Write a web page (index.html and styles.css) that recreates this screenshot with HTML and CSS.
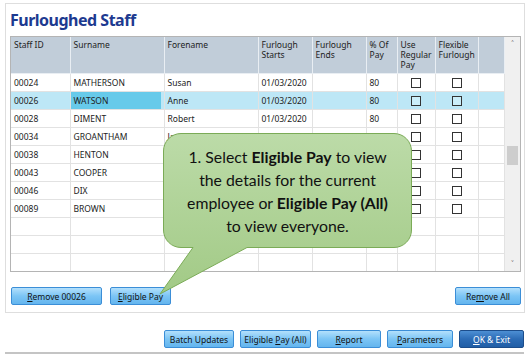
FILE: index.html
```html
<!DOCTYPE html>
<html lang="en">
<head>
    <meta charset="UTF-8">
    <title>Furloughed Staff</title>
    <link rel="stylesheet" href="styles.css">
</head>
<body>
    <div class="window">
        <section class="panel">
            <h1 class="title">Furloughed Staff</h1>

            <!-- Grid staff -->
            <div class="grid">
                <table class="staff">
                    <colgroup>
                        <col style="width:59px"><col style="width:94px"><col style="width:94px">
                        <col style="width:54px"><col style="width:54px"><col style="width:31px">
                        <col style="width:36px"><col style="width:41px"><col>
                    </colgroup>
                    <thead>
                        <tr>
                            <th>Staff ID</th><th>Surname</th><th>Forename</th>
                            <th>Furlough Starts</th><th>Furlough Ends</th><th>% Of Pay</th>
                            <th>Use Regular Pay</th><th>Flexible Furlough</th><th></th>
                        </tr>
                    </thead>
                    <tbody>
                        <tr><td>00024</td><td>MATHERSON</td><td>Susan</td><td>01/03/2020</td><td></td><td>80</td><td class="chk"><span class="box"></span></td><td class="chk"><span class="box"></span></td><td></td></tr>
                        <tr class="current"><td>00026</td><td class="sel">WATSON</td><td>Anne</td><td>01/03/2020</td><td></td><td>80</td><td class="chk"><span class="box"></span></td><td class="chk"><span class="box"></span></td><td></td></tr>
                        <tr><td>00028</td><td>DIMENT</td><td>Robert</td><td>01/03/2020</td><td></td><td>80</td><td class="chk"><span class="box"></span></td><td class="chk"><span class="box"></span></td><td></td></tr>
                        <tr><td>00034</td><td>GROANTHAM</td><td>Jane</td><td>01/03/2020</td><td></td><td>80</td><td class="chk"><span class="box"></span></td><td class="chk"><span class="box"></span></td><td></td></tr>
                        <tr><td>00038</td><td>HENTON</td><td>Paul</td><td>01/03/2020</td><td></td><td>80</td><td class="chk"><span class="box"></span></td><td class="chk"><span class="box"></span></td><td></td></tr>
                        <tr><td>00043</td><td>COOPER</td><td>Mark</td><td>01/03/2020</td><td></td><td>80</td><td class="chk"><span class="box"></span></td><td class="chk"><span class="box"></span></td><td></td></tr>
                        <tr><td>00046</td><td>DIX</td><td>Helen</td><td>01/03/2020</td><td></td><td>80</td><td class="chk"><span class="box"></span></td><td class="chk"><span class="box"></span></td><td></td></tr>
                        <tr><td>00089</td><td>BROWN</td><td>David</td><td>01/03/2020</td><td></td><td>80</td><td class="chk"><span class="box"></span></td><td class="chk"><span class="box"></span></td><td></td></tr>
                        <tr><td></td><td></td><td></td><td></td><td></td><td></td><td></td><td></td><td></td></tr>
                        <tr><td></td><td></td><td></td><td></td><td></td><td></td><td></td><td></td><td></td></tr>
                        <tr><td></td><td></td><td></td><td></td><td></td><td></td><td></td><td></td><td></td></tr>
                    </tbody>
                </table>
                <div class="scrollbar">
                    <span class="arrow">&#708;</span>
                    <span class="thumb"></span>
                    <span class="arrow">&#709;</span>
                </div>
            </div>

            <!-- Tombol baris -->
            <div class="actions">
                <button class="btn btn-remove"><u>R</u>emove 00026</button>
                <button class="btn btn-elig"><u>E</u>ligible Pay</button>
                <button class="btn btn-removeall push">Re<u>m</u>ove All</button>
            </div>
        </section>

        <div class="footer">
            <button class="btn w-batch">Batch Updates</button>
            <button class="btn w-all">Eligible <u>P</u>ay (All)</button>
            <button class="btn w-report"><u>R</u>eport</button>
            <button class="btn w-param"><u>P</u>arameters</button>
            <button class="btn btn-primary w-ok"><u>O</u>K &amp; Exit</button>
        </div>

        <!-- Callout -->
        <div class="callout">
            <svg class="callout-shape" width="249" height="162" viewBox="0 0 249 162">
                <defs>
                    <linearGradient id="green" x1="0" y1="0" x2="0" y2="1">
                        <stop offset="0" stop-color="#bcdba8"/>
                        <stop offset="1" stop-color="#a2ca86"/>
                    </linearGradient>
                </defs>
                <path d="M18,0.5 H231 A17.5,17.5 0 0 1 248.5,18 V97 A17.5,17.5 0 0 1 231,114.5 H84 L-3,161 L30,114.5 H18 A17.5,17.5 0 0 1 0.5,97 V18 A17.5,17.5 0 0 1 18,0.5 Z"
                      fill="url(#green)" stroke="#7bab57" stroke-width="1"/>
            </svg>
            <p class="callout-text">1. Select <b>Eligible Pay</b> to view<br>the details for the current<br>employee or <b>Eligible Pay (All)</b><br>to view everyone.</p>
        </div>
    </div>
</body>
</html>
```

FILE: styles.css
```css
body {
    margin: 0;
    background: #fff;
    font-family: "Noto Sans", "Open Sans", sans-serif;
}

.window {
    position: relative;
    width: 531px;
    height: 355px;
    overflow: hidden;
}

.panel {
    box-sizing: border-box;
    margin: 3px 0 0 5px;
    width: 520px;
    height: 310px;
    border: 1px solid #dedede;
    padding: 0 3px 0 4px;
}

.title {
    margin: 0;
    height: 32px;
    line-height: 32px;
    font-size: 16px;
    font-weight: bold;
    color: #1d3a90;
    letter-spacing: -0.5px;
}

.grid {
    display: flex;
    width: 511px;
    height: 236px;
    box-sizing: border-box;
    border: 1px solid #b4b4b4;
    overflow: hidden;
}

.staff {
    flex: 1;
    table-layout: fixed;
    border-collapse: collapse;
    font-size: 8.5px;
    color: #222;
}

.staff th {
    height: 36px;
    padding: 3px 3px 0;
    box-sizing: border-box;
    background: #c1cdd9;
    border-right: 1px solid #e9eef3;
    border-bottom: 1px solid #e9eef3;
    text-align: left;
    vertical-align: top;
    font-weight: normal;
    line-height: 10px;
}

.staff td {
    height: 18px;
    padding: 0 3px;
    box-sizing: border-box;
    border-right: 1px solid #e2e2e2;
    border-bottom: 1px solid #e2e2e2;
    white-space: nowrap;
    overflow: hidden;
}

.staff tr.current td {
    background: #bde7f6;
}

.staff td.sel {
    background: #67caea !important;
    box-shadow: inset -3px 0 0 #bde7f6;
}

.staff td.chk {
    text-align: center;
    padding: 0;
}

.box {
    display: inline-block;
    width: 8px;
    height: 8px;
    border: 1px solid #333;
    background: #fff;
    vertical-align: middle;
}

.current .box {
    background: #cbeef9;
}

.scrollbar {
    width: 15px;
    background: #f0f0f0;
    display: flex;
    flex-direction: column;
    align-items: center;
}

.arrow {
    font-size: 9px;
    line-height: 14px;
    color: #555;
}

.thumb {
    width: 11px;
    height: 19px;
    margin-top: 95px;
    margin-bottom: auto;
    background: #cdcdcd;
}

.actions {
    display: flex;
    margin-top: 15px;
}

.btn {
    box-sizing: border-box;
    height: 18px;
    padding: 0;
    font-family: "Noto Sans", sans-serif;
    font-size: 8.5px;
    color: #111;
    background: linear-gradient(#b3e0fc, #7cc5f5 50%, #64b5ee);
    border: 1px solid #3b8ed7;
    border-radius: 2px;
}

.btn-remove { width: 91px; margin-left: 1px; }
.btn-elig { width: 61px; margin-left: 8px; }
.btn-removeall { width: 66px; }
.push { margin-left: auto; }

.footer {
    display: flex;
    gap: 6px;
    justify-content: flex-end;
    margin: 17px 7px 0 5px;
    padding-bottom: 4px;
    border-bottom: 2px solid #c4c4c4;
    width: 519px;
    box-sizing: border-box;
}

.w-batch { width: 70px; }
.w-all { width: 71px; }
.w-report { width: 64px; }
.w-param { width: 66px; }
.w-ok { width: 65px; }

.btn-primary {
    color: #fff;
    background: linear-gradient(#4d8fd4, #2c6cb6 50%, #215ea6);
    border-color: #1c4d8b;
}

.callout {
    position: absolute;
    left: 163px;
    top: 133px;
    width: 249px;
    height: 115px;
}

.callout-shape {
    position: absolute;
    left: 0;
    top: 0;
    overflow: visible;
}

.callout-text {
    position: relative;
    margin: 0;
    padding: 12px 0 0;
    text-align: center;
    font-family: Lato, "Open Sans", sans-serif;
    font-size: 15.8px;
    line-height: 23px;
    color: #111;
    white-space: nowrap;
}
```
